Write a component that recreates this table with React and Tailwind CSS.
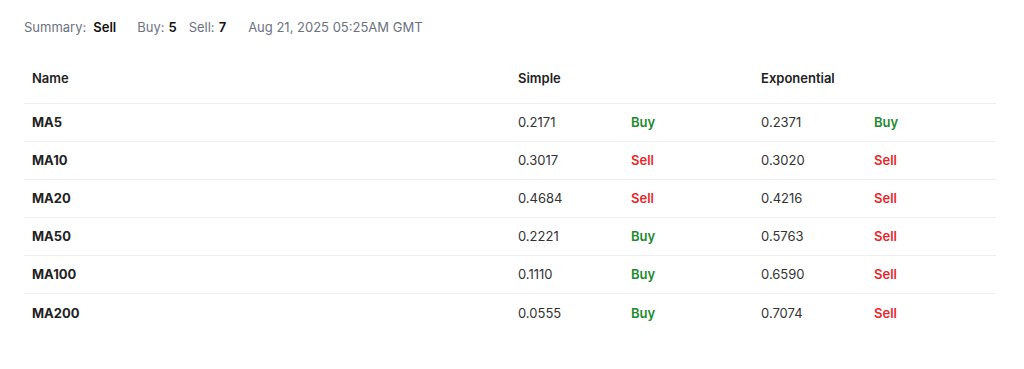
const rows = [
  { name: 'MA5', s: '0.2171', sa: 'Buy', e: '0.2371', ea: 'Buy' },
  { name: 'MA10', s: '0.3017', sa: 'Sell', e: '0.3020', ea: 'Sell' },
  { name: 'MA20', s: '0.4684', sa: 'Sell', e: '0.4216', ea: 'Sell' },
  { name: 'MA50', s: '0.2221', sa: 'Buy', e: '0.5763', ea: 'Sell' },
  { name: 'MA100', s: '0.1110', sa: 'Buy', e: '0.6590', ea: 'Sell' },
  { name: 'MA200', s: '0.0555', sa: 'Buy', e: '0.7074', ea: 'Sell' },
]

function Action({ value }) {
  return (
    <span className={value === 'Buy' ? 'font-semibold text-[#1e8a2e]' : 'font-semibold text-[#e8262a]'}>{value}</span>
  )
}

export default function App() {
  return (
    <div className="min-h-screen bg-white px-6 pt-[19px] text-[13px] text-[#222]" style={{ fontFamily: 'Inter, sans-serif' }}>
      {/* Summary line */}
      <div className="flex items-center h-[18px] text-[#6b7280]">
        <span>Summary:</span>
        <span className="ml-[7px] font-semibold text-[#111]">Sell</span>
        <span className="ml-[21px]">Buy:</span>
        <span className="ml-[4px] font-semibold text-[#111]">5</span>
        <span className="ml-[12px]">Sell:</span>
        <span className="ml-[4px] font-semibold text-[#111]">7</span>
        <span className="ml-[22px]">Aug 21, 2025 05:25AM GMT</span>
      </div>

      <table className="mt-[27px] w-[972px] table-fixed border-collapse">
        <colgroup>
          <col className="w-[486px]" />
          <col className="w-[113px]" />
          <col className="w-[130px]" />
          <col className="w-[113px]" />
          <col className="w-[130px]" />
        </colgroup>
        <thead>
          <tr className="h-[39px] border-b border-[#eeeeee]">
            <th className="px-2 pb-[10px] text-left font-semibold text-[#222]">Name</th>
            <th colSpan={2} className="px-2 pb-[10px] text-left font-semibold text-[#222]">Simple</th>
            <th colSpan={2} className="px-2 pb-[10px] text-left font-semibold text-[#222]">Exponential</th>
          </tr>
        </thead>
        <tbody>
          {rows.map((r, i) => (
            <tr key={r.name} className={i < rows.length - 1 ? 'h-[38px] border-b border-[#eeeeee]' : 'h-[38px]'}>
              <td className="px-2 pt-[2px] font-bold text-[#222]">{r.name}</td>
              <td className="px-2 pt-[2px] text-[#333]">{r.s}</td>
              <td className="px-2 pt-[2px]"><Action value={r.sa} /></td>
              <td className="px-2 pt-[2px] text-[#333]">{r.e}</td>
              <td className="px-2 pt-[2px]"><Action value={r.ea} /></td>
            </tr>
          ))}
        </tbody>
      </table>
    </div>
  )
}
